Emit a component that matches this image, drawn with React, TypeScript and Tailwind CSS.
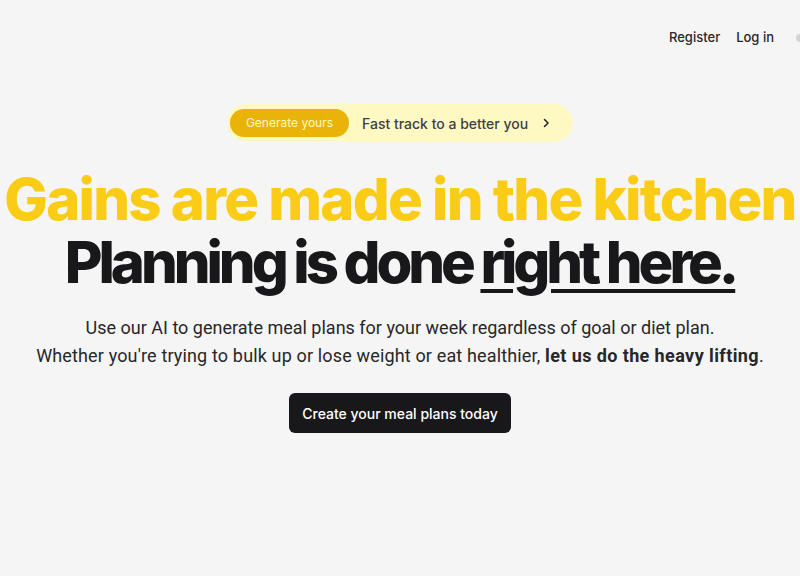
import React from "react";

export default function App() {
  return (
    <div className="min-h-[576px] w-full overflow-hidden bg-[#f5f5f5]" style={{ fontFamily: "Inter, sans-serif" }}>
      <header className="flex h-[75px] items-center justify-end gap-4">
        <a className="text-[13px] font-medium text-[#27272a]">Register</a>
        <a className="text-[13px] font-medium text-[#27272a]">Log in</a>
        <span className="ml-[6px] h-[8px] w-[4px] rounded-l-full bg-[#d4d4d4]"></span>
      </header>
      <main className="flex flex-col items-center">
        <div className="mt-[29px] flex h-[38px] items-center rounded-full bg-[#fef9c3] pl-[3px] pr-[21px]">
          <span className="flex h-[28px] items-center rounded-full bg-[#eab308] px-[16px] text-[12px] text-[#fef9c3]">
            Generate yours
          </span>
          <span className="ml-[13px] text-[14px] font-medium text-[#3f3f46]">Fast track to a better you</span>
          <svg className="ml-[12px]" width="12" height="12" viewBox="0 0 24 24" fill="none" stroke="#27272a" strokeWidth="3.2" strokeLinecap="round" strokeLinejoin="round">
            <path d="M9 5l7 7-7 7" />
          </svg>
        </div>
        <h1 className="mt-[26px] whitespace-nowrap text-center text-[58px] font-extrabold leading-[63px]">
          <span className="block tracking-[-0.03em] text-[#facc15]">Gains are made in the kitchen</span>
          <span className="block tracking-[-0.07em] text-[#18181b]">
            Planning is done{" "}
            <span className="underline decoration-[4px] underline-offset-[6px]">right here.</span>
          </span>
        </h1>
        <div className="mt-[20px] text-center text-[18px] leading-[28px] text-[#27272a]" style={{ fontFamily: "Roboto, sans-serif" }}>
          <p>Use our AI to generate meal plans for your week regardless of goal or diet plan.</p>
          <p className="tracking-[0.15px]">
            Whether you're trying to bulk up or lose weight or eat healthier,{" "}
            <span className="font-bold tracking-[0.4px]">let us do the heavy lifting</span>.
          </p>
        </div>
        <button className="mt-[23px] h-[40px] rounded-md bg-[#18181b] px-[13px] text-[14px] font-medium text-white">
          Create your meal plans today
        </button>
      </main>
    </div>
  );
}
